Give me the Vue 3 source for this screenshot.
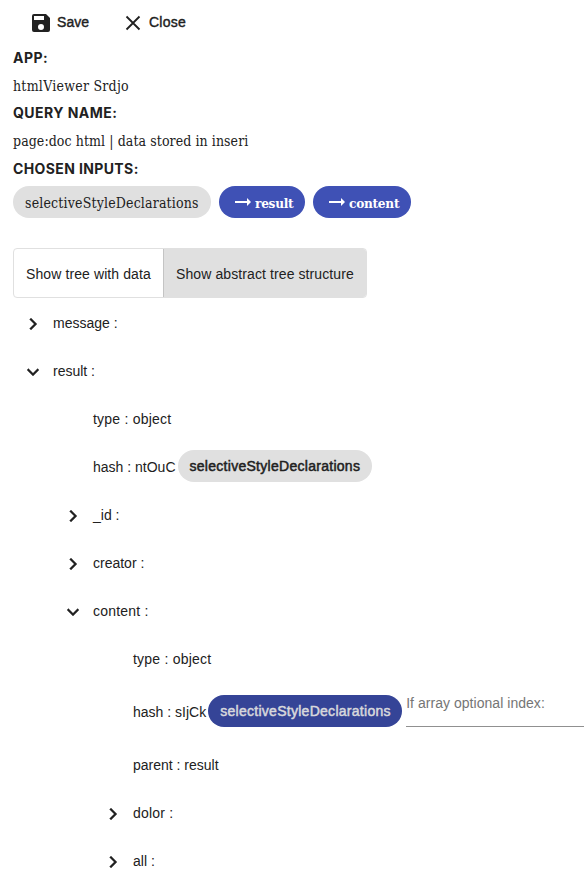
<script setup>
const rows = [
  { label: 'message :', level: 0, icon: 'right' },
  { label: 'result :', level: 0, icon: 'down' },
  { label: 'type : object', level: 1, wide: true },
  { label: 'hash : ntOuC', level: 1, chip: 'grey' },
  { label: '_id :', level: 1, icon: 'right' },
  { label: 'creator :', level: 1, icon: 'right' },
  { label: 'content :', level: 1, icon: 'down', wide: true },
  { label: 'type : object', level: 2, wide: true },
  { label: 'hash : sIjCk', level: 2, chip: 'navy', field: true },
  { label: 'parent : result', level: 2 },
  { label: 'dolor :', level: 2, icon: 'right', wide: true },
  { label: 'all :', level: 2, icon: 'right' },
]
const paths = {
  right: 'M10 6 8.59 7.41 13.17 12l-4.58 4.59L10 18l6-6z',
  down: 'M16.59 8.59 12 13.17 7.41 8.59 6 10l6 6 6-6z',
}
</script>

<template>
  <main class="page">
    <div class="toolbar">
      <button class="action save">
        <svg class="disk" viewBox="0 0 24 24"><path d="M17 3H5a2 2 0 0 0-2 2v14a2 2 0 0 0 2 2h14a2 2 0 0 0 2-2V7l-4-4zm-5 16a3 3 0 1 1 0-6 3 3 0 0 1 0 6zm3-10H5V5h10v4z" /></svg>
        <span>Save</span>
      </button>
      <button class="action">
        <svg class="cross" viewBox="0 0 16 16"><path d="M1.5 1.500l13 13M14.500 1.500l-13 13" /></svg>
        <span class="close-text">Close</span>
      </button>
    </div>

    <h2 class="heading"><span class="h-app">APP:</span></h2>
    <p class="value"><span class="v-app">htmlViewer Srdjo</span></p>
    <h2 class="heading"><span class="h-query">QUERY NAME:</span></h2>
    <p class="value last"><span class="v-query">page:doc html | data stored in inseri</span></p>
    <h2 class="heading"><span class="h-inputs">CHOSEN INPUTS:</span></h2>

    <div class="inputs">
      <span class="pill w-style"><span>selectiveStyleDeclarations</span></span>
      <span class="pill blue w-result">
        <svg class="arrow" viewBox="0 0 16 10"><path d="M0 4h12V1l4 4-4 4V6H0z" /></svg><span>result</span>
      </span>
      <span class="pill blue w-content">
        <svg class="arrow" viewBox="0 0 16 10"><path d="M0 4h12V1l4 4-4 4V6H0z" /></svg><span>content</span>
      </span>
    </div>

    <div class="toggle">
      <button class="option first">Show tree with data</button>
      <button class="option second">Show abstract tree structure</button>
    </div>

    <div class="tree">
      <div v-for="(row, i) in rows" :key="i" class="row" :class="['level-' + row.level, { tall: row.field }]">
        <span class="caret">
          <svg v-if="row.icon" viewBox="0 0 24 24"><path :d="paths[row.icon]" /></svg>
        </span>
        <span class="label" :class="{ wide: row.wide }">{{ row.label }}</span>
        <span v-if="row.chip" class="chip" :class="row.chip">selectiveStyleDeclarations</span>
        <span v-if="row.field" class="field">If array optional index:</span>
      </div>
    </div>
  </main>
</template>

<style>
body { margin: 0; background: #fff; overflow: hidden; }
</style>

<style scoped>
.page {
  width: 584px;
  height: 877px;
  overflow: hidden;
  box-sizing: border-box;
  padding-left: 13px;
  color: #212121;
  font: 14px "Liberation Sans", Arial, sans-serif;
  white-space: nowrap;
}
button { margin: 0; padding: 0; border: 0; background: none; font: inherit; color: inherit; }
.toolbar { display: flex; height: 44px; align-items: center; }
.action { display: flex; align-items: center; -webkit-text-stroke: 0.4px currentColor; letter-spacing: 0.05px; }
.save { width: 112px; }
.close-text { letter-spacing: 0.25px; }
.disk { width: 24px; height: 24px; margin: 2px 4px 0 16px; fill: #212121; stroke: none; }
.cross { width: 16px; height: 16px; margin: 2px 8px 0 0; fill: none; stroke: #212121; stroke-width: 1.8; }
.heading { margin: 0; height: 28px; font: 700 14px/28px Inter, sans-serif; }
.value { margin: 0; height: 27px; font: 14px/28px "DejaVu Serif Condensed", "DejaVu Serif", serif; font-stretch: condensed; }
.last { height: 28px; }
.h-app { letter-spacing: 0.5px; }
.h-query { letter-spacing: 0.45px; }
.h-inputs { letter-spacing: 0.38px; }
.v-app { letter-spacing: 0.25px; }
.v-query { letter-spacing: 0.08px; }
.inputs { display: flex; gap: 8px; margin-top: 3px; }
.pill {
  display: flex;
  box-sizing: border-box;
  height: 32px;
  align-items: center;
  padding: 2px 0 0 12px;
  border-radius: 16px;
  background: #e0e0e0;
  font: 14px "DejaVu Serif Condensed", "DejaVu Serif", serif;
  font-stretch: condensed;
  letter-spacing: 0.17px;
}
.blue { padding-left: 16px; background: #3f51b5; color: #fff; font-weight: 700; font-size: 13.5px; letter-spacing: -0.27px; }
.w-style { width: 198px; }
.w-result { width: 86px; }
.w-content { width: 98px; }
.arrow { width: 16px; height: 10px; margin: 0 4px 3px 0; fill: #fff; }
.toggle {
  display: flex;
  width: 354px;
  height: 50px;
  box-sizing: border-box;
  margin-top: 30px;
  border: 1px solid #e0e0e0;
  border-radius: 4px;
  overflow: hidden;
}
.option { height: 48px; padding: 2px 0 0 12px; text-align: left; letter-spacing: 0.1px; }
.first { width: 149px; }
.second { flex: 1; border-left: 1px solid #c4c4c4; background: #e0e0e0; }
.tree { margin-top: 2px; }
.row { display: flex; height: 48px; align-items: center; }
.tall { height: 58px; }
.level-1 { padding-left: 40px; }
.level-2 { padding-left: 80px; }
.caret { display: flex; flex: none; width: 32px; padding-left: 8px; }
.caret svg { width: 24px; height: 24px; fill: #212121; stroke: #212121; stroke-width: 0.3; }
.label { flex: none; padding-bottom: 2px; }
.wide { letter-spacing: 0.22px; }
.chip {
  flex: none;
  box-sizing: border-box;
  width: 194px;
  height: 32px;
  margin: 0 4px 4px 2px;
  padding-left: 12px;
  border-radius: 16px;
  line-height: 32px;
  letter-spacing: 0.28px;
  -webkit-text-stroke: 0.5px currentColor;
}
.grey { background: #e0e0e0; }
.navy { background: #354497; color: #d8d8dc; }
.field { flex: none; box-sizing: border-box; width: 180px; height: 34px; margin-bottom: 6px; border-bottom: 1px solid #909090; color: #757575; line-height: 20px; letter-spacing: 0.04px; }
</style>
